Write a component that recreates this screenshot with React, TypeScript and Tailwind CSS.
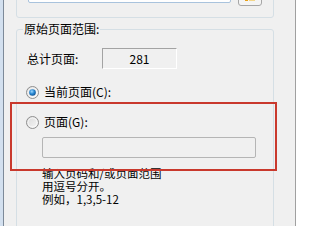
import React from 'react';

const font = { fontFamily: '"Noto Sans CJK SC", "Liberation Sans", sans-serif' };

const Radio: React.FC<{ checked?: boolean }> = ({ checked }) => (
    <svg width="13" height="13" viewBox="0 0 13 13" className="shrink-0">
        <defs>
            <linearGradient id={checked ? 'rg1' : 'rg0'} x1="0" y1="0" x2="1" y2="1">
                <stop offset="0" stopColor="#d9d9d9" />
                <stop offset="1" stopColor="#f8f8f8" />
            </linearGradient>
            <radialGradient id="dot" cx="0.4" cy="0.35" r="0.7">
                <stop offset="0" stopColor="#9fd8ff" />
                <stop offset="0.5" stopColor="#2a8ad4" />
                <stop offset="1" stopColor="#0c4f91" />
            </radialGradient>
        </defs>
        <circle cx="6.5" cy="6.5" r="6" fill={checked ? 'url(#rg1)' : 'url(#rg0)'} stroke="#8f8f8f" strokeWidth="1" />
        <circle cx="6.5" cy="6.5" r="4.5" fill="none" stroke="#ffffff" strokeWidth="0.8" opacity="0.8" />
        {checked && <circle cx="6.5" cy="6.5" r="3.3" fill="url(#dot)" />}
    </svg>
);

export default function App() {
    return (
        <div className="relative flex w-[309px] h-[226px] overflow-hidden bg-white text-[12px] text-black" style={font}>
            <div className="w-[3px] bg-[#d3e0ef]" />
            <div className="w-px bg-[#7d8a99]" />
            <div className="w-[291px] bg-[#f0f0f0] flex flex-col">
                {/* top group, mostly scrolled out of view */}
                <div className="ml-[12px] mt-[-30px] w-[258px] h-[48px] border border-[#d5dfe5] rounded-[3px] flex items-start shrink-0">
                    <div className="ml-[11px] mt-[9px] w-[203px] h-[23px] border border-[#a9c3dd] bg-white rounded-[2px]" />
                    <div className="ml-[7px] mt-[11px] w-[24px] h-[24px] border border-[#a6a6a6] rounded-[3px] bg-[#f4f4f4] flex items-end justify-center pb-[4px]">
                        <div className="flex gap-px">
                            <div className="w-[3px] h-[2px] bg-[#e8a019]" />
                            <div className="w-[6px] h-[2px] bg-[#f3d68a]" />
                        </div>
                    </div>
                </div>

                <fieldset className="ml-[12px] mt-[4px] w-[258px] h-[260px] border border-[#d5dfe5] rounded-[3px] shrink-0">
                    <legend className="ml-[6px] px-px leading-[14px]">原始页面范围:</legend>

                    <div className="flex items-center mt-[12px] h-[21px]">
                        <span className="ml-[10px] w-[75px] leading-[14px]">总计页面:</span>
                        <div className="w-[75px] h-[21px] border border-t-[#a3a3a3] border-l-[#a3a3a3] border-b-white border-r-white flex items-center justify-center leading-[14px]">
                            281
                        </div>
                    </div>

                    <label className="flex items-center gap-[5px] mt-[16px] ml-[9px] h-[14px] leading-[14px]">
                        <Radio checked />
                        <span>当前页面(C):</span>
                    </label>

                    <label className="flex items-center gap-[5px] mt-[16px] ml-[9px] h-[14px] leading-[14px]">
                        <Radio />
                        <span>页面(G):</span>
                    </label>

                    <div className="ml-[25px] mt-[8px] w-[214px] h-[21px] border border-[#b5b5b5] rounded-[2px] bg-[#f0f0f0]" />

                    <div className="ml-[25px] mt-[9px] text-[11.5px] leading-[13px]">
                        <div>输入页码和/或页面范围</div>
                        <div>用逗号分开。</div>
                        <div>例如，1,3,5-12</div>
                    </div>
                </fieldset>
            </div>
            <div className="w-px bg-[#a0a0a0]" />
            <div className="flex-1 bg-white" />

            {/* red highlight annotation */}
            <div className="absolute left-[10px] top-[102px] w-[267px] h-[69px] border-2 border-[#c9392d]" />
        </div>
    );
}
